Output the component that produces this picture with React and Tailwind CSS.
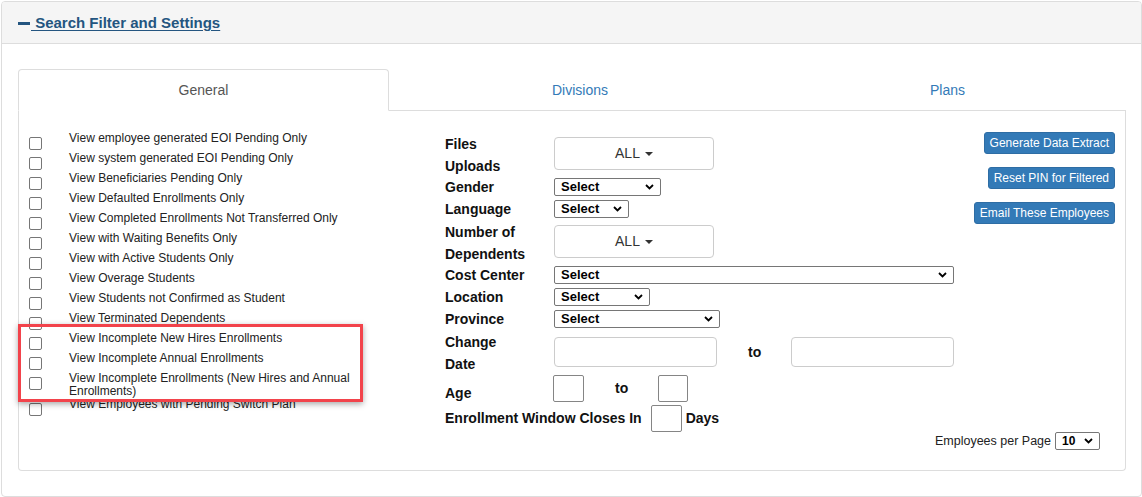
const filters = [
  'View employee generated EOI Pending Only',
  'View system generated EOI Pending Only',
  'View Beneficiaries Pending Only',
  'View Defaulted Enrollments Only',
  'View Completed Enrollments Not Transferred Only',
  'View with Waiting Benefits Only',
  'View with Active Students Only',
  'View Overage Students',
  'View Students not Confirmed as Student',
  'View Terminated Dependents',
  'View Incomplete New Hires Enrollments',
  'View Incomplete Annual Enrollments',
  'View Incomplete Enrollments (New Hires and Annual Enrollments)',
  'View Employees with Pending Switch Plan'
];

function Chevron() {
  return (
    <svg width="9" height="6" viewBox="0 0 9 6" className="absolute right-[6px] top-1/2 -translate-y-1/2 pointer-events-none">
      <path d="M1 1l3.5 3.5L8 1" fill="none" stroke="#000" strokeWidth="1.8" />
    </svg>
  );
}

function SelectBox({ className, label = 'Select', textClass = 'text-[13px] font-bold' }) {
  return (
    <div className={`relative h-[18px] border border-[#767676] rounded-[2px] bg-white ${className}`}>
      <div className={`pl-[6px] leading-[16px] text-black ${textClass}`}>{label}</div>
      <Chevron />
    </div>
  );
}

function AllButton() {
  return (
    <button className="w-[160px] h-[33px] border border-[#ccc] rounded-[4px] bg-white flex items-center justify-center text-[14px] font-normal text-[#333]">
      ALL
      <span className="ml-[5px] inline-block w-0 h-0 border-l-[4px] border-r-[4px] border-t-[4px] border-l-transparent border-r-transparent border-t-[#333]" />
    </button>
  );
}

function Row({ label, h = 'h-[22px]', children }) {
  return (
    <div className={`flex items-center ${h}`}>
      <div className="w-[109px] leading-[22px]">{label}</div>
      {children}
    </div>
  );
}

export default function App() {
  return (
    <div className="relative w-[1142px] h-[497px] bg-white pt-[1px] pl-[1px] font-['Liberation_Sans',Arial,sans-serif]">

      <div className="w-[1141px] h-[496px] border border-[#ddd] rounded-[4px] overflow-hidden">

        {/* HEADER */}
        <div className="h-[42px] bg-[#f5f5f5] border-b border-[#ddd] flex items-center pl-[16px] pt-[1px]">
          <a className="text-[15px] font-bold text-[#245580] underline underline-offset-[2px] flex items-center">
            <span className="inline-block w-[12px] h-[3px] bg-[#245580] mr-[1px]" />
            <span className="whitespace-pre"> Search Filter and Settings</span>
          </a>
        </div>

        {/* TABS */}
        <div className="mt-[25px] pl-[16px] pr-[15px]">

          <div className="flex h-[42px]">
            <div className="w-[371px] flex items-center justify-center pt-[1px] border border-[#ddd] border-b-transparent rounded-t-[4px] text-[14px] text-[#555]">
              General
            </div>
            <div className="w-[380px] pl-[2px] flex items-center justify-center pt-[1px] border-b border-[#ddd] text-[14px] text-[#337ab7]">
              Divisions
            </div>
            <div className="flex-1 flex items-center justify-center pt-[1px] border-b border-[#ddd] text-[14px] text-[#337ab7]">
              Plans
            </div>
          </div>

          <div className="h-[360px] border-l border-r border-b border-[#ddd] rounded-b-[4px]">

            <div className="flex pt-[16px]">

              {/* CHECKBOXES */}
              <div className="w-[426px] pl-[10px] text-[12px] text-[#222]">
                {filters.map((f, i) => {
                  const long = i === 12;
                  return (
                    <div key={f} className={`flex ${long ? 'h-[26px]' : 'h-[20px]'}`}>
                      <div className="w-[40px] pt-[10px]">
                        <input
                          type="checkbox"
                          className="appearance-none block w-[13px] h-[13px] border border-[#767676] rounded-[2px] bg-white m-0"
                        />
                      </div>
                      <div className={long ? 'leading-[13px] pt-[5px] w-[300px]' : 'leading-[20px] pt-[1px] whitespace-nowrap'}>
                        {f}
                      </div>
                    </div>
                  );
                })}
              </div>

              {/* FILTER FIELDS */}
              <div className="w-[510px] mt-[5px] text-[14px] font-bold text-[#111]">

                <div className="flex h-[44px]">
                  <div className="w-[109px] leading-[22px] pt-[1px]">Files<br />Uploads</div>
                  <div className="mt-[5px]"><AllButton /></div>
                </div>

                <Row label="Gender"><SelectBox className="w-[107px]" /></Row>
                <Row label="Language"><SelectBox className="w-[75px]" /></Row>

                <div className="flex h-[44px]">
                  <div className="w-[109px] leading-[22px] pt-[1px]">Number of<br />Dependents</div>
                  <div className="mt-[5px]"><AllButton /></div>
                </div>

                <Row label="Cost Center"><SelectBox className="w-[400px]" /></Row>
                <Row label="Location"><SelectBox className="w-[96px]" /></Row>
                <Row label="Province"><SelectBox className="w-[166px]" /></Row>

                <div className="flex items-center h-[44px]">
                  <div className="w-[109px] leading-[22px] pt-[1px]">Change<br />Date</div>
                  <input className="w-[163px] h-[30px] border border-[#ccc] rounded-[4px] bg-white" />
                  <span className="ml-[31px] w-[12px]">to</span>
                  <input className="ml-[31px] w-[163px] h-[30px] border border-[#ccc] rounded-[4px] bg-white" />
                </div>

                <div className="flex h-[30px]">
                  <div className="w-[108px] leading-[22px] self-end">Age</div>
                  <div className="flex items-center mt-[1px] h-[27px]">
                    <input className="w-[31px] h-[27px] border border-[#858585] rounded-[2px] bg-white" />
                    <span className="ml-[31px] w-[12px]">to</span>
                    <input className="ml-[31px] w-[30px] h-[27px] border border-[#858585] rounded-[2px] bg-white" />
                  </div>
                </div>

                <div className="flex items-center h-[28px]">
                  <span>Enrollment Window Closes In</span>
                  <input className="ml-[9px] w-[31px] h-[27px] border border-[#858585] rounded-[2px] bg-white" />
                  <span className="ml-[4px]">Days</span>
                </div>
              </div>

              {/* ACTIONS */}
              <div className="flex-1 flex flex-col items-end gap-[13px] mt-[5px] pr-[10px]">
                <button className="h-[22px] px-[5px] bg-[#337ab7] border border-[#2e6da4] rounded-[3px] text-white text-[12px] leading-[18px]">
                  Generate Data Extract
                </button>
                <button className="h-[22px] px-[5px] bg-[#337ab7] border border-[#2e6da4] rounded-[3px] text-white text-[12px] leading-[18px]">
                  Reset PIN for Filtered
                </button>
                <button className="h-[22px] px-[5px] bg-[#337ab7] border border-[#2e6da4] rounded-[3px] text-white text-[12px] leading-[18px]">
                  Email These Employees
                </button>
              </div>
            </div>

            {/* PAGE SIZE */}
            <div className="flex justify-end items-center pr-[25px] text-[12.5px] text-[#222]">
              <span className="mr-[4px]">Employees per Page</span>
              <SelectBox className="w-[45px]" label="10" textClass="text-[12px] font-bold" />
            </div>
          </div>
        </div>
      </div>

      {/* highlight annotation */}
      <div className="absolute left-[18px] top-[324px] w-[345px] h-[78px] border-[3px] border-[#f2434b] shadow-[0_2px_6px_rgba(0,0,0,0.35)] pointer-events-none" />
    </div>
  );
}
